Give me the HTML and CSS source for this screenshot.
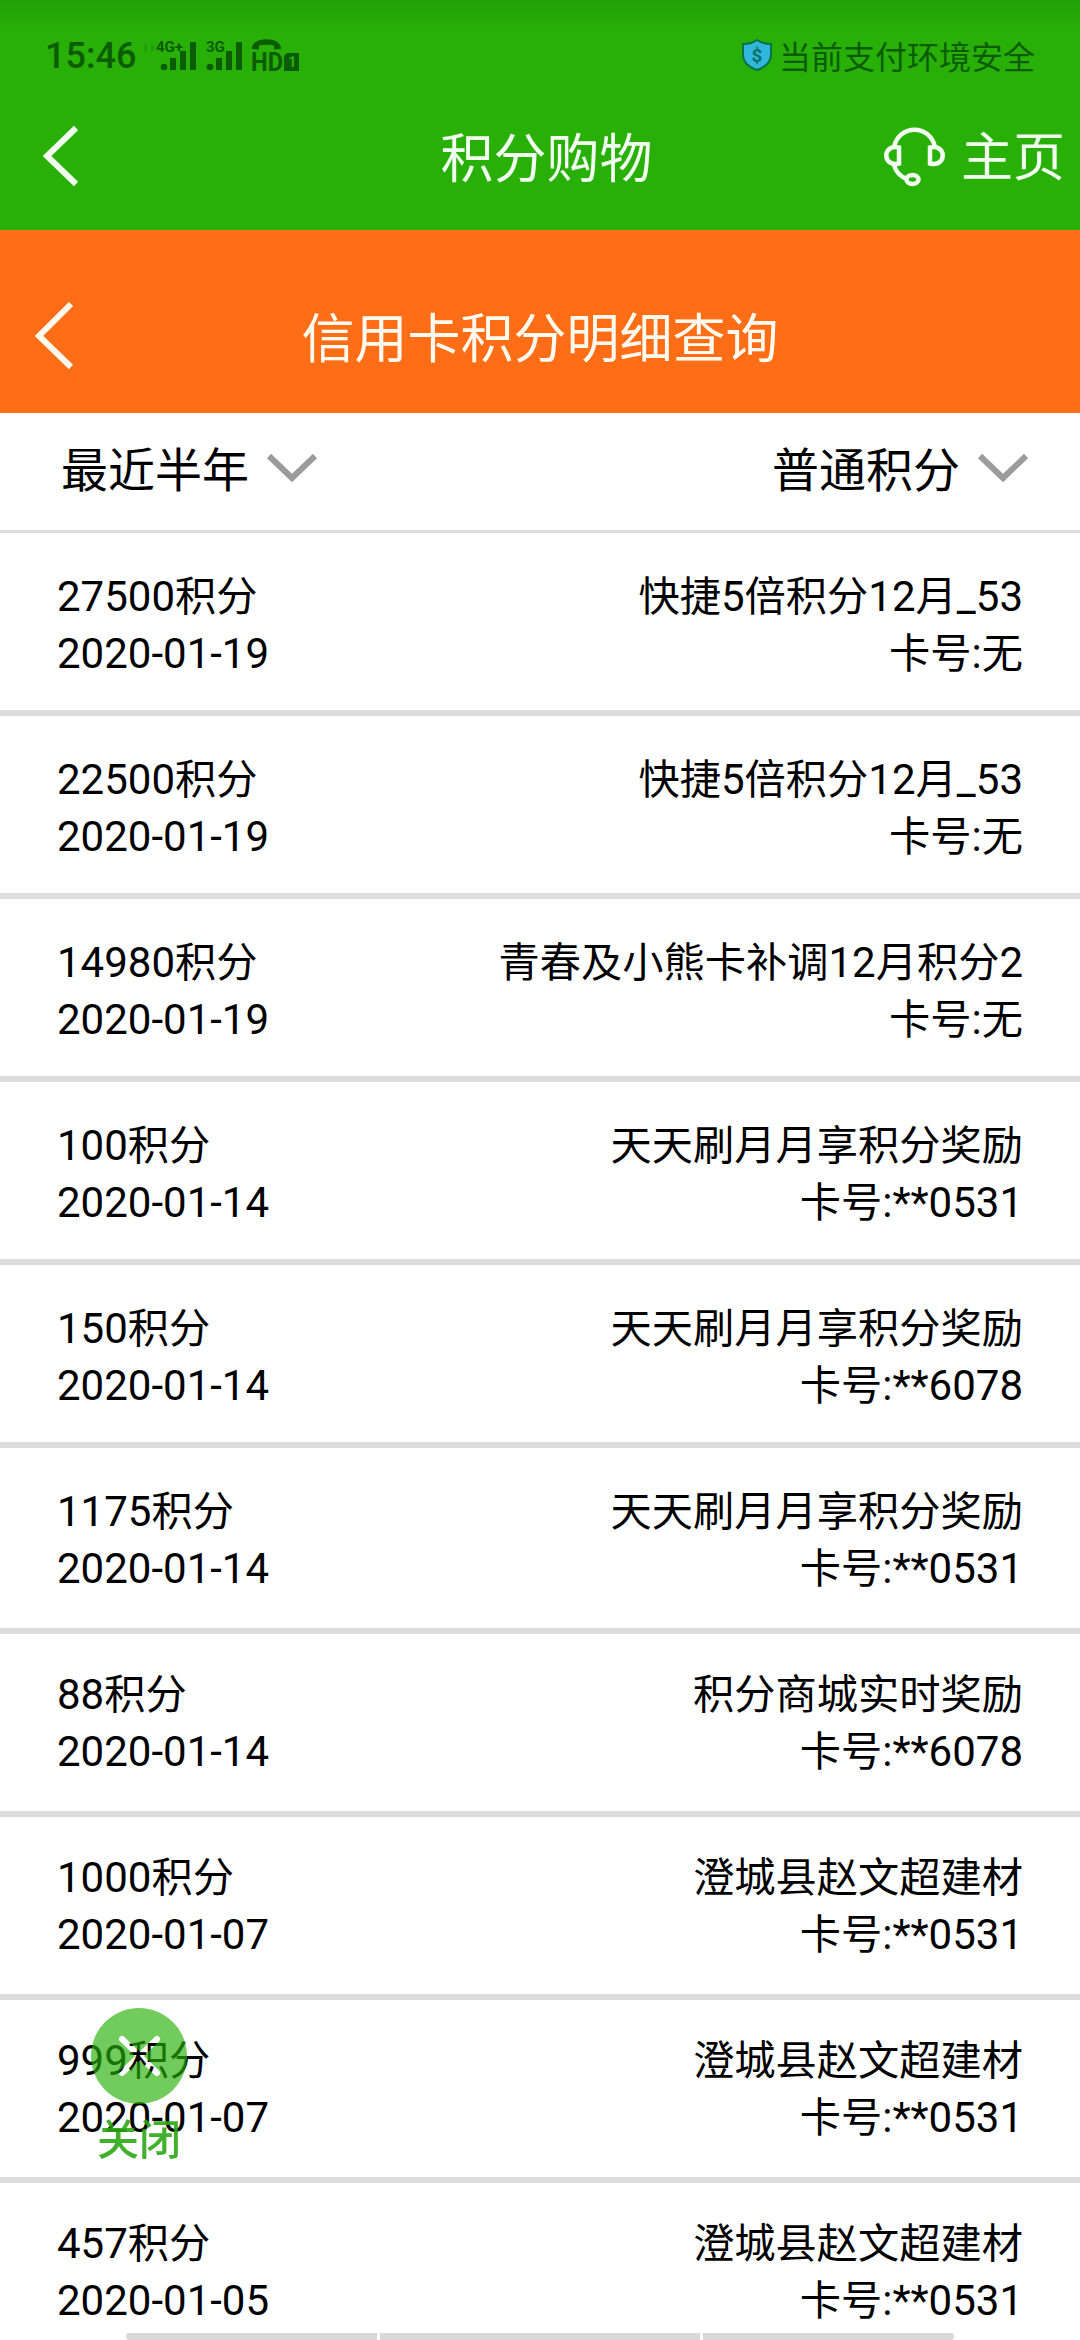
FILE: index.html
```html
<!DOCTYPE html>
<html lang="zh-CN">
<head>
  <meta charset="UTF-8" />
  <meta name="viewport" content="width=device-width, initial-scale=1.0" />
  <title>信用卡积分明细查询</title>
  <link rel="stylesheet" href="styles.css">
</head>
<body>
  <header class="app-header">
    <div class="status-bar">
      <div class="status-left">
        <span class="clock">15:46</span>
        <svg class="signals" width="170" height="44" viewBox="0 -4 170 44">
          <path class="faint" d="M3 10l4-5v10zM11 5l4 5-4 5z" />
          <text x="16" y="14">4G+</text>
          <circle cx="24" cy="29" r="3.3" />
          <path d="M30 20h6v12h-6zM40 13h6v19h-6zM50 4h6v28h-6z" />
          <text x="66" y="14">3G</text>
          <circle cx="70" cy="29" r="3.3" />
          <path d="M76 20h6v12h-6zM86 13h6v19h-6zM96 4h6v28h-6z" />
          <path d="M112 11c-1-13 30-13 29 0l-7 .5v-4c-5-1-10-1-15 0v4z" />
          <text class="hd" x="111" y="33" textLength="32" lengthAdjust="spacingAndGlyphs">HD</text>
          <path d="M147 15h12v18h-15v-15z" />
          <text class="sim" x="148" y="29">1</text>
        </svg>
      </div>
      <div class="status-right">
        <svg width="32" height="34" viewBox="0 0 32 34">
          <path d="M16 2C12 5 7 6 2 6v10c0 8 5 13 14 16 9-3 14-8 14-16V6C25 6 20 5 16 2z" fill="#31b7de" stroke="#087245" stroke-width="2" />
          <text class="dollar" x="16" y="24" text-anchor="middle">$</text>
        </svg>
        <span>当前支付环境安全</span>
      </div>
    </div>
    <div class="title-bar">
      <a class="back" href="#"><svg width="40" height="66" viewBox="0 0 40 66"><path d="M35 4L6 32l29 28" /></svg></a>
      <h1>积分购物</h1>
      <a class="home" href="#">
        <svg width="64" height="64" viewBox="0 0 64 64">
          <path d="M12 22C17-1 48-1 53 22" />
          <path d="M17 22.500v16c-17 4-17-20 0-16zM48 22.500v16c17 4 17-20 0-16zM12 40c2 7 7 12 13 14" />
          <ellipse cx="30.500" cy="54.500" rx="6" ry="4.500" />
        </svg>
        <span>主页</span>
      </a>
    </div>
  </header>

  <div class="page-bar">
    <a class="back" href="#"><svg width="40" height="72" viewBox="0 0 40 72"><path d="M36 3L4 35l32 31" /></svg></a>
    <h2>信用卡积分明细查询</h2>
  </div>

  <div class="filters">
    <div class="filter"><span>最近半年</span> <svg width="52" height="32" viewBox="0 0 52 32"><path d="M3 3l23 22L49 3" /></svg></div>
    <div class="filter"><span>普通积分</span> <svg width="52" height="32" viewBox="0 0 52 32"><path d="M3 3l23 22L49 3" /></svg></div>
  </div>

  <ul class="records">
    <li><div>27500<span>积分</span><br>2020-01-19</div><div class="detail"><span>快捷</span>5<span>倍积分</span>12<span>月</span>_53<br><span>卡号</span>:<span>无</span></div></li>
    <li><div>22500<span>积分</span><br>2020-01-19</div><div class="detail"><span>快捷</span>5<span>倍积分</span>12<span>月</span>_53<br><span>卡号</span>:<span>无</span></div></li>
    <li><div>14980<span>积分</span><br>2020-01-19</div><div class="detail"><span>青春及小熊卡补调</span>12<span>月积分</span>2<br><span>卡号</span>:<span>无</span></div></li>
    <li><div>100<span>积分</span><br>2020-01-14</div><div class="detail"><span>天天刷月月享积分奖励</span><br><span>卡号</span>:**0531</div></li>
    <li><div>150<span>积分</span><br>2020-01-14</div><div class="detail"><span>天天刷月月享积分奖励</span><br><span>卡号</span>:**6078</div></li>
    <li><div>1175<span>积分</span><br>2020-01-14</div><div class="detail"><span>天天刷月月享积分奖励</span><br><span>卡号</span>:**0531</div></li>
    <li><div>88<span>积分</span><br>2020-01-14</div><div class="detail"><span>积分商城实时奖励</span><br><span>卡号</span>:**6078</div></li>
    <li><div>1000<span>积分</span><br>2020-01-07</div><div class="detail"><span>澄城县赵文超建材</span><br><span>卡号</span>:**0531</div></li>
    <li><div>999<span>积分</span><br>2020-01-07</div><div class="detail"><span>澄城县赵文超建材</span><br><span>卡号</span>:**0531</div></li>
    <li><div>457<span>积分</span><br>2020-01-05</div><div class="detail"><span>澄城县赵文超建材</span><br><span>卡号</span>:**0531</div></li>
  </ul>

  <!-- floating close button -->
  <a class="close" href="#">
    <svg width="96" height="96" viewBox="0 0 96 96">
      <mask id="cross">
        <rect width="96" height="96" fill="#fff" />
        <path d="M31 31l35 34M66 31L31 65" stroke="#000" stroke-width="6" stroke-linecap="round" />
      </mask>
      <circle cx="48" cy="48" r="48" mask="url(#cross)" />
    </svg>
    <span>关闭</span>
  </a>

  <div class="nav-hint"><i></i><i></i><i></i></div>
</body>
</html>
```
FILE: styles.css
```css
:root {
  --green: #28b008;
  --orange: #ff6e16;
  --status: #0b5c03;
  --line: #dcdcdc;
}

* {
  box-sizing: border-box;
}

body {
  font-family: Roboto, "Noto Sans CJK SC", sans-serif;
  margin: 0;
  height: 2340px;
  position: relative;
  overflow: hidden;
  background: #fff;
  color: #000;
}

a {
  color: inherit;
  text-decoration: none;
}

svg {
  display: block;
  flex: none;
}

h1, h2 {
  margin: 0;
  font-size: 53px;
  font-weight: 400;
  line-height: 80px;
}

.app-header {
  height: 230px;
  background: linear-gradient(#249f08, var(--green) 30px);
  color: #f2fff0;
}

.status-bar {
  height: 112px;
  padding: 0 45px;
  display: flex;
  justify-content: space-between;
  align-items: center;
  color: var(--status);
}

.status-left, .status-right {
  display: flex;
  align-items: center;
}

.clock {
  font-size: 36px;
  font-weight: 500;
}

.signals {
  margin-left: 4px;
  fill: var(--status);
  font-size: 15px;
  font-weight: 700;
}

.signals .faint {
  opacity: 0.25;
}

.signals .hd {
  font-size: 25px;
}

.signals .sim {
  font-size: 15px;
  fill: var(--green);
}

.status-right {
  gap: 6px;
  padding-bottom: 2px;
  font-size: 32px;
}

.dollar {
  font-size: 19px;
  font-weight: 700;
  fill: #087265;
}

.title-bar {
  height: 90px;
  display: grid;
  grid-template-columns: 300px 1fr 300px;
  align-items: center;
  text-align: center;
}

.title-bar h1 {
  padding: 5px 0 0 13px;
}

.back svg {
  fill: none;
  stroke: currentColor;
  stroke-width: 6;
}

.title-bar .back {
  padding-left: 41px;
}

.home {
  display: flex;
  align-items: center;
  justify-content: flex-end;
  gap: 15px;
  padding-right: 15px;
  font-size: 52px;
  line-height: 70px;
}

.home span {
  padding-top: 3px;
}

.home svg {
  fill: none;
  stroke: currentColor;
  stroke-width: 4.500;
}

.page-bar {
  height: 183px;
  padding-top: 30px;
  display: grid;
  grid-template-columns: 200px 1fr 200px;
  align-items: center;
  text-align: center;
  background: var(--orange);
  color: #fffaf0;
}

.page-bar h2 {
  padding-top: 6px;
}

.page-bar .back {
  padding-left: 35px;
}

.filters {
  height: 120px;
  padding: 0 51px 6px 61px;
  display: flex;
  justify-content: space-between;
  align-items: center;
  border-bottom: 3px solid var(--line);
  font-size: 47px;
}

.filter {
  display: flex;
  align-items: center;
  gap: 17px;
}

.filter span {
  padding-bottom: 5px;
}

.filter svg {
  fill: none;
  stroke: #9b9b9b;
  stroke-width: 6;
}

.records {
  list-style: none;
  margin: 0;
  padding: 0;
}

.records li {
  height: 183px;
  padding: 35px 57px 0;
  display: flex;
  justify-content: space-between;
  border-bottom: 6px solid var(--line);
  font-size: 42px;
  line-height: 57px;
}

.records li:nth-child(6) {
  height: 186px;
}

.records li:nth-child(n+7) {
  padding-top: 32px;
}

/* chinese runs sit slightly smaller than the digits */
.records span {
  font-size: 41.250px;
  line-height: 1;
}

.detail {
  text-align: right;
}

.close {
  position: absolute;
  left: 91px;
  top: 2008px;
  display: flex;
  flex-direction: column;
  align-items: center;
  color: #2da916;
  font-size: 42px;
  line-height: 60px;
  font-weight: 500;
}

.close svg {
  fill: var(--green);
  opacity: 0.65;
}

.close span {
  margin-top: 7px;
  opacity: 0.9;
}

.nav-hint {
  position: absolute;
  left: 126px;
  right: 126px;
  bottom: 0;
  height: 7px;
  display: grid;
  grid-template-columns: 251px 1fr 251px;
  gap: 3px;
}

.nav-hint i {
  background: #d8d8d8;
}

.nav-hint i:first-child {
  border-radius: 4px 0 0 4px;
}

.nav-hint i:last-child {
  border-radius: 0 4px 4px 0;
}
```
